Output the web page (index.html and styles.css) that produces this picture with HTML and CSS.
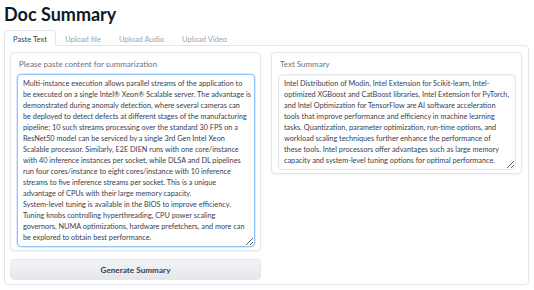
FILE: index.html
```html
<!DOCTYPE html>
<html>
  <head>
    <meta charset="UTF-8">
    <meta name="viewport" content="width=device-width, initial-scale=1.0">
    <title>Doc Summary</title>
    <link rel="stylesheet" href="styles.css">
  </head>
  <body>
    <h1>Doc Summary</h1>

    <div class="tabs">
      <div class="tab-nav">
        <button class="tab selected">Paste Text</button>
        <button class="tab">Upload file</button>
        <button class="tab">Upload Audio</button>
        <button class="tab">Upload Video</button>
      </div>

      <div class="tab-panel">
        <div class="column">
          <div class="block">
            <label for="content">Please paste content for summarization</label>
            <textarea id="content" class="input-box focused" rows="15">Multi-instance execution allows parallel streams of the application to
be executed on a single Intel® Xeon® Scalable server. The advantage is
demonstrated during anomaly detection, where several cameras can
be deployed to detect defects at different stages of the manufacturing
pipeline; 10 such streams processing over the standard 30 FPS on a
ResNet50 model can be serviced by a single 3rd Gen Intel Xeon
Scalable processor. Similarly, E2E DIEN runs with one core/instance
with 40 inference instances per socket, while DLSA and DL pipelines
run four cores/instance to eight cores/instance with 10 inference
streams to five inference streams per socket. This is a unique
advantage of CPUs with their large memory capacity.
System-level tuning is available in the BIOS to improve efficiency.
Tuning knobs controlling hyperthreading, CPU power scaling
governors, NUMA optimizations, hardware prefetchers, and more can
be explored to obtain best performance.</textarea>
          </div>
          <button class="button">Generate Summary</button>
        </div>

        <div class="column">
          <div class="block">
            <label for="summary">Text Summary</label>
            <textarea id="summary" class="input-box" rows="8" readonly>Intel Distribution of Modin, Intel Extension for Scikit-learn, Intel-
optimized XGBoost and CatBoost libraries, Intel Extension for PyTorch,
and Intel Optimization for TensorFlow are AI software acceleration
tools that improve performance and efficiency in machine learning
tasks. Quantization, parameter optimization, run-time options, and
workload scaling techniques further enhance the performance of
these tools. Intel processors offer advantages such as large memory
capacity and system-level tuning options for optimal performance.</textarea>
          </div>
        </div>
      </div>
    </div>
  </body>
</html>
```

FILE: styles.css
```css
body {
  font-family: 'Lato', sans-serif;
  margin: 0;
  padding: 0 5px 0 4px;
  background-color: #fff;
  color: #374151;
}
h1 {
  font-size: 18px;
  font-weight: 700;
  color: #111827;
  margin: 3px 0 0 0;
  line-height: 22px;
  height: 27px;
}
.tab-nav {
  display: flex;
  height: 15px;
}
.tab {
  font-family: inherit;
  font-size: 7.6px;
  color: #9ca3af;
  background: none;
  border: 1px solid transparent;
  border-bottom: none;
  border-radius: 4px 4px 0 0;
  padding: 0 8px;
  margin: 0;
  height: 16px;
  cursor: pointer;
}
.tab.selected {
  color: #374151;
  background-color: #fff;
  border-color: #e5e7eb;
  position: relative;
  z-index: 1;
}
.tab-panel {
  display: flex;
  gap: 10px;
  border: 1px solid #e5e7eb;
  border-radius: 0 4px 4px 4px;
  padding: 6px 6px 4px 5px;
  height: 228px;
}
.column {
  flex: 1;
  display: flex;
  flex-direction: column;
  gap: 8px;
}
.block {
  display: flex;
  flex-direction: column;
  border: 1px solid #e5e7eb;
  border-radius: 4px;
  box-shadow: 0 1px 2px rgba(0, 0, 0, 0.05);
  padding: 5px 5px 3px 6px;
}
label {
  font-size: 8px;
  color: #6b7280;
  margin: 2px 0 5px 2px;
  line-height: 9px;
}
.input-box {
  font-family: inherit;
  font-size: 7.3px;
  line-height: 11px;
  color: #374151;
  border: 1px solid #e5e7eb;
  border-radius: 4px;
  padding: 3px 5px;
  white-space: pre;
  overflow: hidden;
  resize: vertical;
  margin: 0;
  box-shadow: inset 0 1px 2px rgba(0, 0, 0, 0.05);
}
.input-box.focused {
  border-color: #93c5fd;
  box-shadow: 0 0 0 1px #dbeafe;
}
.button {
  font-family: inherit;
  font-size: 8.2px;
  font-weight: 700;
  color: #374151;
  height: 24px;
  border: 1px solid #e5e7eb;
  border-radius: 4px;
  background: linear-gradient(to bottom, #f3f4f6, #e5e7eb);
  cursor: pointer;
}
```
